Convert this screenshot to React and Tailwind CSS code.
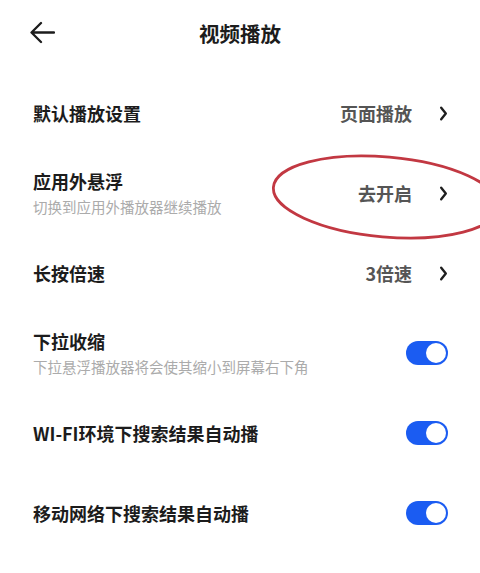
import React from "react";

const font = { fontFamily: '"Noto Sans CJK SC", "Noto Sans", sans-serif' };

function Chevron() {
  return (
    <svg width="9" height="15" viewBox="0 0 9 15" className="shrink-0">
      <polyline points="2.2,1.8 6.8,7.5 2.2,13.2" fill="none" stroke="#1f1f1f" strokeWidth="2.4" strokeLinecap="round" strokeLinejoin="round" />
    </svg>
  );
}

function Toggle() {
  return (
    <div className="w-[42px] h-[24px] rounded-full bg-[#1b5cf2] flex items-center justify-end pr-[2px] shrink-0">
      <div className="w-[20px] h-[20px] rounded-full bg-white" />
    </div>
  );
}

function Row({ title, sub, value, toggle }) {
  return (
    <div className="h-[80px] flex items-center justify-between pl-[33px] pr-[32px]">
      <div className="flex flex-col">
        <div className="text-[18px] leading-[24px] font-bold text-[#1c1c1c]">{title}</div>
        {sub && <div className="mt-[4px] text-[14.5px] leading-[20px] text-[#ababab]">{sub}</div>}
      </div>
      {toggle ? (
        <Toggle />
      ) : (
        <div className="flex items-center gap-[27px]">
          <span className="text-[18px] leading-[24px] font-bold text-[#555555]">{value}</span>
          <Chevron />
        </div>
      )}
    </div>
  );
}

export default function App() {
  return (
    <div className="relative w-[480px] h-[573px] bg-white overflow-hidden" style={font}>
      <div className="h-[68px] relative flex items-center justify-center">
        <svg width="26" height="24" viewBox="0 0 26 24" className="absolute left-[29px] top-[21px]">
          <path d="M25 11.5 H3 M12 2 L2.5 11.5 L12 21" fill="none" stroke="#1c1c1c" strokeWidth="2.3" strokeLinecap="round" strokeLinejoin="round" />
        </svg>
        <h1 className="text-[20.5px] font-bold text-[#1c1c1c] leading-[28px] -mt-[2px]">视频播放</h1>
      </div>

      <div className="pt-[5px]">
        <Row title="默认播放设置" value="页面播放" />
        <Row title="应用外悬浮" sub="切换到应用外播放器继续播放" value="去开启" />
        <Row title="长按倍速" value="3倍速" />
        <Row title="下拉收缩" sub="下拉悬浮播放器将会使其缩小到屏幕右下角" toggle />
        <Row title="WI-FI环境下搜索结果自动播" toggle />
        <Row title="移动网络下搜索结果自动播" toggle />
      </div>

      {/* red hand-drawn circle */}
      <svg className="absolute inset-0 pointer-events-none" width="480" height="573">
        <ellipse cx="386" cy="197" rx="113" ry="40" transform="rotate(5 386 197)" fill="none" stroke="#c23842" strokeWidth="2.8" />
      </svg>
    </div>
  );
}
